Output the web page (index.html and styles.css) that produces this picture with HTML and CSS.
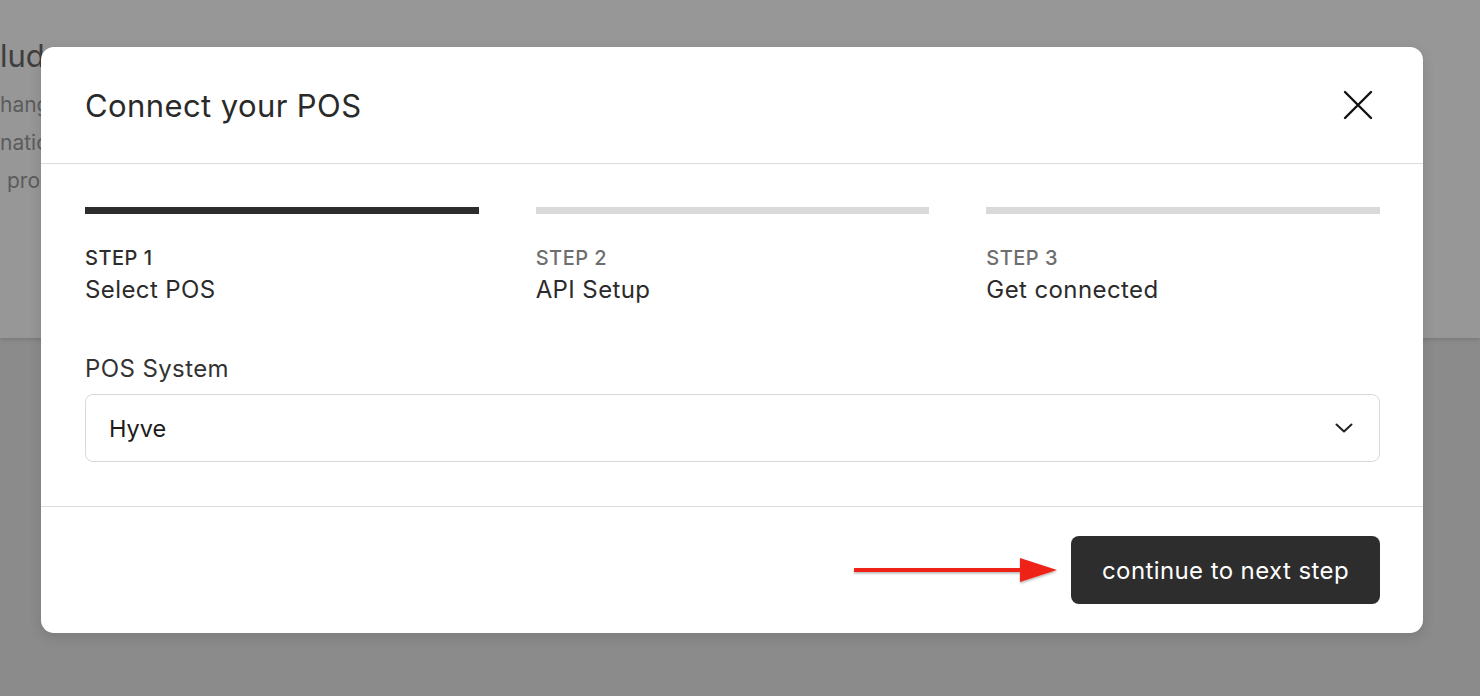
FILE: index.html
```html
<!DOCTYPE html>
<html lang="en">
<head>
<meta charset="utf-8">
<title>Connect your POS</title>
<link rel="stylesheet" href="styles.css">
</head>
<body>
<div class="page">
  <section class="bg-card">
    <h2 class="bg-title">ludes</h2>
    <p class="bg-line">hanges</p>
    <p class="bg-line">nation</p>
    <p class="bg-line indent">products</p>
  </section>
</div>

<div class="modal" role="dialog" aria-labelledby="modal-title">
  <header class="modal-header">
    <h1 id="modal-title" class="modal-title">Connect your POS</h1>
    <button class="close-btn" aria-label="Close">
      <svg width="30" height="30" viewBox="0 0 30 30" fill="none" stroke="#111" stroke-width="2.4" stroke-linecap="round">
        <path d="M2 2 L28 28 M28 2 L2 28"/>
      </svg>
    </button>
  </header>

  <div class="modal-body">
    <ol class="steps">
      <li class="step active">
        <span class="step-bar"></span>
        <span class="step-label">STEP 1</span>
        <span class="step-name">Select POS</span>
      </li>
      <li class="step">
        <span class="step-bar"></span>
        <span class="step-label">STEP 2</span>
        <span class="step-name">API Setup</span>
      </li>
      <li class="step">
        <span class="step-bar"></span>
        <span class="step-label">STEP 3</span>
        <span class="step-name">Get connected</span>
      </li>
    </ol>

    <label class="field-label">POS System</label>
    <div class="select">
      <span class="select-value">Hyve</span>
      <svg class="chevron" width="18" height="10" viewBox="0 0 18 10" fill="none" stroke="#222" stroke-width="2" stroke-linecap="round" stroke-linejoin="round">
        <path d="M1.5 1.5 L9 8.5 L16.5 1.5"/>
      </svg>
    </div>
  </div>

  <footer class="modal-footer">
    <svg class="annot-arrow" width="206" height="30" viewBox="0 0 206 30">
      <defs>
        <filter id="sh" x="-10%" y="-50%" width="120%" height="200%">
          <feDropShadow dx="0" dy="1.5" stdDeviation="1.2" flood-color="#000" flood-opacity="0.3"/>
        </filter>
      </defs>
      <g filter="url(#sh)" fill="#ee2418">
        <rect x="1" y="13" width="170" height="4"/>
        <path d="M167 3 L204 15 L167 27 Z"/>
      </g>
    </svg>
    <button class="primary-btn">continue to next step</button>
  </footer>
</div>
</body>
</html>
```

FILE: styles.css
```css
* { box-sizing: border-box; }

html, body {
  margin: 0;
  padding: 0;
  width: 1480px;
  height: 696px;
  overflow: hidden;
}

body {
  font-family: Inter, "Noto Sans", "Liberation Sans", sans-serif;
  background: #8b8b8b;
  position: relative;
}

.page {
  height: 100%;
}

.bg-card {
  height: 338px;
  background: #979797;
  box-shadow: 0 2px 4px rgba(0, 0, 0, 0.12);
  padding-top: 36px;
}

.bg-title {
  margin: 0 0 10px;
  font-size: 31px;
  line-height: 40px;
  font-weight: 400;
  color: #3e3e3e;
}

.bg-line {
  margin: 0;
  font-size: 21px;
  line-height: 38px;
  color: #5c5c5c;
}

.bg-line.indent { padding-left: 7px; }

.modal {
  position: absolute;
  left: 41px;
  top: 47px;
  width: 1382px;
  height: 586px;
  background: #fff;
  border-radius: 13px;
  box-shadow: 0 4px 14px rgba(0, 0, 0, 0.12);
  display: flex;
  flex-direction: column;
}

.modal-header {
  height: 117px;
  border-bottom: 1px solid #dcdcdc;
  display: flex;
  align-items: center;
  justify-content: space-between;
  padding: 0 50px 0 44px;
}

.modal-title {
  margin: 0;
  font-size: 31px;
  font-weight: 400;
  color: #2a2a2a;
  letter-spacing: 0.4px;
}

.close-btn {
  border: 0;
  background: none;
  padding: 0;
  width: 30px;
  height: 30px;
  display: flex;
  cursor: pointer;
}

.modal-body {
  padding: 43px 43px 0 44px;
  height: 343px;
  border-bottom: 1px solid #dcdcdc;
}

.steps {
  list-style: none;
  margin: 0;
  padding: 0;
  display: grid;
  grid-template-columns: repeat(3, 1fr);
  column-gap: 57px;
}

.step {
  display: flex;
  flex-direction: column;
}

.step-bar {
  height: 7px;
  background: #d9d9d9;
  margin-bottom: 30px;
}

.step.active .step-bar { background: #2d2d2d; }

.step-label {
  font-size: 20px;
  line-height: 28px;
  font-weight: 500;
  color: #6e6e6e;
  letter-spacing: 0.5px;
}

.step.active .step-label { color: #2d2d2d; }

.step-name {
  font-size: 24px;
  line-height: 35px;
  color: #2b2b2b;
  letter-spacing: 0.4px;
}

.field-label {
  display: block;
  margin-top: 46px;
  font-size: 24px;
  line-height: 32px;
  color: #333;
  letter-spacing: 0.4px;
}

.select {
  margin-top: 9px;
  height: 68px;
  border: 1px solid #d9d9d9;
  border-radius: 8px;
  display: flex;
  align-items: center;
  justify-content: space-between;
  padding: 0 26px 0 23px;
}

.select-value {
  font-size: 23.5px;
  color: #1c1c1c;
}

.modal-footer {
  flex: 1;
  display: flex;
  align-items: center;
  justify-content: flex-end;
  padding: 0 43px 0 44px;
  gap: 12px;
}

.annot-arrow { display: block; }

.primary-btn {
  height: 68px;
  width: 309px;
  border: 0;
  border-radius: 8px;
  background: #2d2d2d;
  color: #fff;
  font-family: inherit;
  font-size: 24px;
  letter-spacing: 0.4px;
  cursor: pointer;
}
```
